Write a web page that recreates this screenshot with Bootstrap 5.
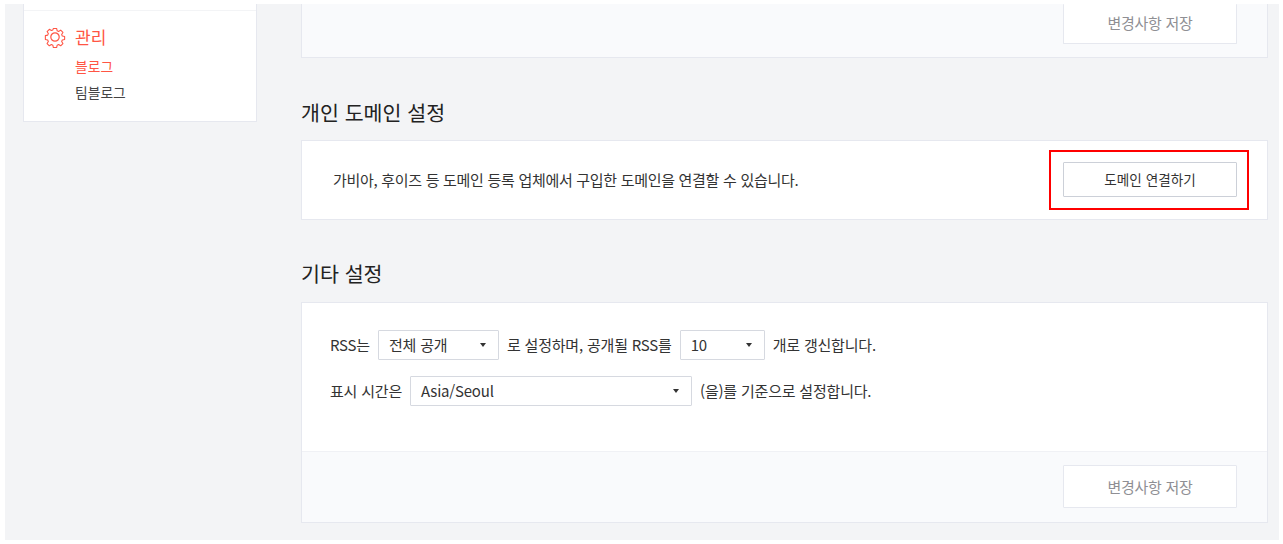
<!DOCTYPE html>
<html lang="ko">
<head>
<meta charset="utf-8">
<title>블로그 설정</title>
<link href="https://cdn.jsdelivr.net/npm/bootstrap@5.3.0/dist/css/bootstrap.min.css" rel="stylesheet">
<style>
html,body{height:100%;background:#fff;overflow:hidden}
body{font-family:"Noto Sans CJK KR","Noto Sans",sans-serif;color:#333;font-size:15px;letter-spacing:-.3px}
.frame{margin:4px 4px 0 5px;height:536px;background:#f3f4f6;overflow:hidden;display:flex}
.side{width:234px;margin-left:18px;margin-right:44px;flex:none}
.sidebox{background:#fff;border:1px solid #e6e8ef;border-top:0;height:118px;padding-top:6px}
.sidesec{border-top:1px solid #f3f4f6;padding:14px 0 0 20px}
.menuhead{display:flex;align-items:center;gap:9px;color:#ff5544;font-size:17px;letter-spacing:0;line-height:24px;height:24px}
.sublink{display:block;margin-left:31px;font-size:13.8px;letter-spacing:0;line-height:20px;text-decoration:none;color:#444;margin-top:6px}
.sublink.on{color:#ff5544;margin-top:7px}
.main{width:967px;flex:none}
.panel{background:#fff;border:1px solid #e6e8ef}
.topcut{height:54px;background:#f9fafc;border-top:0;display:flex;justify-content:flex-end;padding-right:30px}
.savebtn{width:174px;height:40px;background:#fff;border:1px solid #e6e8ef;border-radius:1px;color:#8f8f94;font-size:15px;letter-spacing:-.3px;padding:0}
.topcut .savebtn{border-top:0}
.heading{font-size:20.6px;font-weight:400;letter-spacing:0;color:#222;line-height:28px;margin:0}
.h1gap{margin-top:40px;margin-bottom:14px}
.h2gap{margin-top:39px;margin-bottom:15px}
.domainbody{height:80px;display:flex;align-items:center;justify-content:space-between;padding:0 30px 0 31px}
.btnwrap{position:relative;margin-bottom:2px}
.connbtn{width:174px;height:35px;background:#fff;border:1px solid #ccd0d8;border-radius:1px;font-size:13.6px;letter-spacing:0;color:#333;padding:0;display:block}
.redmark{position:absolute;left:-14px;top:-12px;width:200px;height:60px;border:2px solid #f00;pointer-events:none}
.etc{height:148px;padding:27px 0 0 28px}
.optrow{display:flex;align-items:center;gap:8px;height:30px;margin-bottom:16px;letter-spacing:-.2px}
.fakesel{height:30px;background:#fff;border:1px solid #d6d9e0;border-radius:1px;display:flex;align-items:center;justify-content:space-between;padding:0 12px 0 10px;color:#333}
.caret{width:0;height:0;border-left:3.5px solid transparent;border-right:3.5px solid transparent;border-top:4px solid #333}
.w1{width:121px}.w2{width:85px}.w3{width:282px}
.foot{height:71px;background:#f9fafc;border-top:1px solid #f0f1f5;display:flex;justify-content:flex-end;align-items:flex-start;padding:13px 30px 0 0}
.foot .savebtn{height:43px;padding-top:1px}
</style>
</head>
<body>
<div class="frame">
  <aside class="side">
    <div class="sidebox">
      <div class="sidesec">
        <div class="menuhead">
          <svg width="22" height="22" viewBox="0 0 22 22" fill="none" stroke="#ff5544" stroke-width="1.2" stroke-linejoin="round" aria-hidden="true">
            <path d="M9.2 1.5h3.6l.6 2.6 1.6.7 2.3-1.4 2.5 2.5-1.4 2.3.7 1.7 2.6.6v3.2l-2.6.6-.7 1.7 1.4 2.3-2.5 2.5-2.3-1.4-1.6.7-.6 2.6H9.2l-.6-2.6-1.6-.7-2.3 1.4-2.5-2.5 1.4-2.3-.7-1.7-2.6-.6V9.5l2.6-.6.7-1.7-1.4-2.3 2.5-2.5 2.3 1.4 1.6-.7z" transform="translate(1.1 1.1) scale(.9)"/>
            <circle cx="11" cy="11" r="4.2"/>
          </svg>
          <span>관리</span>
        </div>
        <a class="sublink on" href="#">블로그</a>
        <a class="sublink" href="#">팀블로그</a>
      </div>
    </div>
  </aside>
  <main class="main">
    <div class="panel topcut"><button type="button" class="savebtn">변경사항 저장</button></div>
    <h2 class="heading h1gap">개인 도메인 설정</h2>
    <section class="panel domainbody">
      <span>가비아, 후이즈 등 도메인 등록 업체에서 구입한 도메인을 연결할 수 있습니다.</span>
      <div class="btnwrap"><button type="button" class="connbtn">도메인 연결하기</button><div class="redmark"></div></div>
    </section>
    <h2 class="heading h2gap">기타 설정</h2>
    <section class="panel">
      <div class="etc">
        <div class="optrow"><span>RSS는</span><div class="fakesel w1"><span>전체 공개</span><i class="caret"></i></div><span>로 설정하며, 공개될 RSS를</span><div class="fakesel w2"><span>10</span><i class="caret"></i></div><span>개로 갱신합니다.</span></div>
        <div class="optrow"><span>표시 시간은</span><div class="fakesel w3"><span>Asia/Seoul</span><i class="caret"></i></div><span>(을)를 기준으로 설정합니다.</span></div>
      </div>
      <div class="foot"><button type="button" class="savebtn">변경사항 저장</button></div>
    </section>
  </main>
</div>
<script src="https://cdn.jsdelivr.net/npm/bootstrap@5.3.0/dist/js/bootstrap.bundle.min.js"></script>
</body>
</html>
